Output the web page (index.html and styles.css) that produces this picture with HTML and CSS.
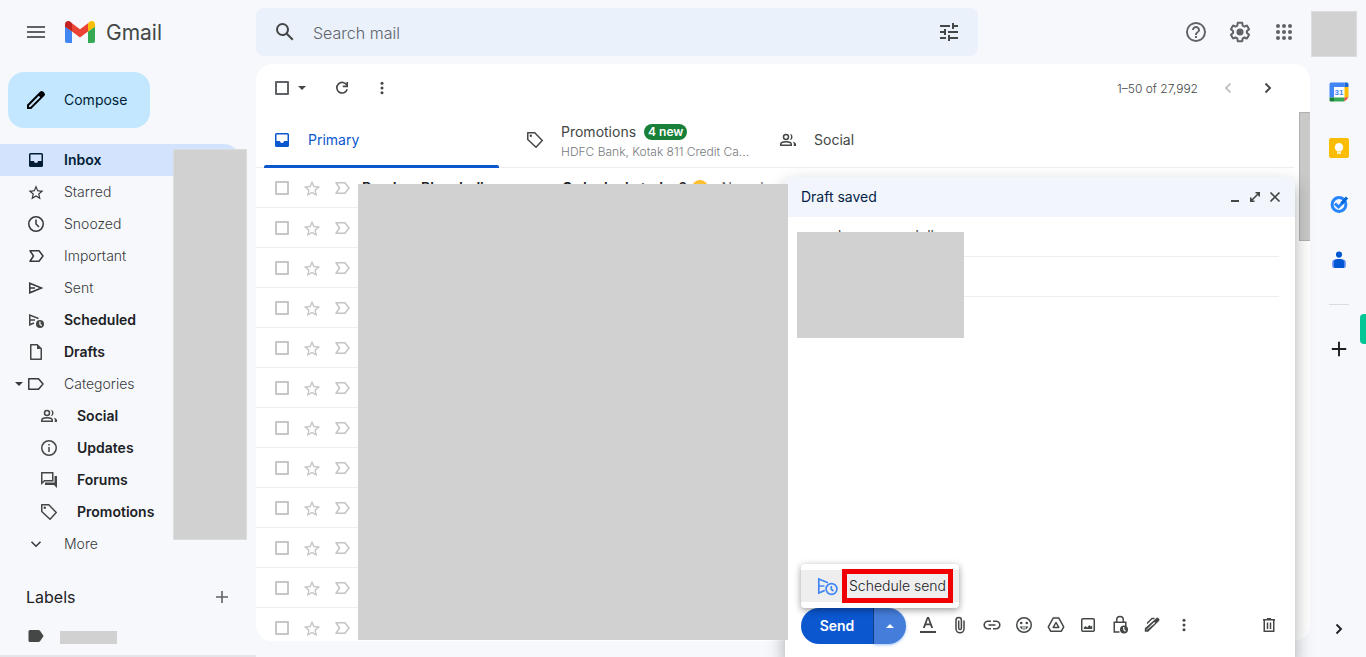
FILE: index.html
```html
<!DOCTYPE html>
<html lang="en">
<head>
<meta charset="utf-8">
<title>Gmail</title>
<link rel="stylesheet" href="styles.css">
</head>
<body>
<svg class="sprite" aria-hidden="true">
  <symbol id="menu" viewBox="0 0 24 24"><path d="M3 18h18v-2H3v2zm0-5h18v-2H3v2zm0-7v2h18V6H3z"/></symbol>
  <symbol id="search" viewBox="0 0 24 24"><path d="M20.49 19l-5.73-5.73C15.53 12.2 16 10.91 16 9.5A6.5 6.5 0 1 0 9.5 16c1.41 0 2.7-.47 3.77-1.24L19 20.49 20.49 19zM5 9.5C5 7.01 7.01 5 9.5 5S14 7.01 14 9.5 11.99 14 9.5 14 5 11.99 5 9.5z"/></symbol>
  <symbol id="tune" viewBox="0 0 24 24"><path d="M3 17v2h6v-2H3zM3 5v2h10V5H3zm10 16v-2h8v-2h-8v-2h-2v6h2zM7 9v2H3v2h4v2h2V9H7zm14 4v-2H11v2h10zm-6-4h2V7h4V5h-4V3h-2v6z"/></symbol>
  <symbol id="help" viewBox="0 0 24 24"><path d="M11 18h2v-2h-2v2zm1-16a10 10 0 1 0 0 20 10 10 0 0 0 0-20zm0 18c-4.41 0-8-3.59-8-8s3.59-8 8-8 8 3.59 8 8-3.59 8-8 8zm0-14c-2.21 0-4 1.79-4 4h2c0-1.1.9-2 2-2s2 .9 2 2c0 2-3 1.75-3 5h2c0-2.25 3-2.5 3-5 0-2.21-1.79-4-4-4z"/></symbol>
  <symbol id="gear" viewBox="0 0 24 24"><path d="M13.85 22.25h-3.7c-.74 0-1.36-.54-1.45-1.27l-.27-1.89c-.27-.14-.53-.29-.79-.46l-1.8.72c-.7.26-1.47-.03-1.81-.65L2.2 15.53c-.35-.66-.2-1.44.36-1.88l1.53-1.19c-.01-.15-.02-.3-.02-.46 0-.15.01-.31.02-.46l-1.52-1.19c-.59-.45-.74-1.26-.37-1.88l1.85-3.19c.34-.62 1.11-.9 1.79-.63l1.81.73c.26-.17.52-.32.78-.46l.27-1.91c.09-.7.71-1.25 1.44-1.25h3.7c.74 0 1.36.54 1.45 1.27l.27 1.89c.27.14.53.29.79.46l1.8-.72c.71-.26 1.48.03 1.82.65l1.84 3.18c.36.66.2 1.44-.36 1.88l-1.52 1.19c.01.15.02.3.02.46s-.01.31-.02.46l1.52 1.19c.56.45.72 1.23.37 1.86l-1.86 3.22c-.34.62-1.11.9-1.8.63l-1.8-.72c-.26.17-.52.32-.78.46l-.27 1.91c-.1.68-.72 1.22-1.46 1.22zm-3.23-2h2.76l.37-2.55.53-.22c.44-.18.88-.44 1.34-.78l.45-.34 2.38.96 1.38-2.4-2.03-1.58.07-.56c.03-.26.06-.51.06-.78s-.03-.53-.06-.78l-.07-.56 2.03-1.58-1.39-2.4-2.39.96-.45-.35c-.42-.32-.87-.58-1.33-.77l-.52-.22-.37-2.55h-2.76l-.37 2.55-.53.21c-.44.19-.88.44-1.34.79l-.45.33-2.38-.95-1.39 2.39 2.03 1.58-.07.56a7 7 0 0 0-.06.79c0 .26.02.53.06.78l.07.56-2.03 1.58 1.38 2.4 2.39-.96.45.35c.43.33.86.58 1.33.77l.53.22.38 2.55z"/><circle cx="12" cy="12" r="3.5"/></symbol>
  <symbol id="apps" viewBox="0 0 24 24"><circle cx="6" cy="6" r="2"/><circle cx="12" cy="6" r="2"/><circle cx="18" cy="6" r="2"/><circle cx="6" cy="12" r="2"/><circle cx="12" cy="12" r="2"/><circle cx="18" cy="12" r="2"/><circle cx="6" cy="18" r="2"/><circle cx="12" cy="18" r="2"/><circle cx="18" cy="18" r="2"/></symbol>
  <symbol id="pencil" viewBox="0 0 24 24"><path d="M20.41 4.94l-1.35-1.35a2 2 0 0 0-2.83 0L3 16.82V21h4.18L20.41 7.77a2 2 0 0 0 0-2.83zM6.41 19.06L5 19v-1.36l9.82-9.82 1.41 1.41-9.82 9.83z"/></symbol>
  <symbol id="inbox" viewBox="0 0 20 20"><path fill-rule="evenodd" d="M4.500 3h11A1.500 1.500 0 0 1 17 4.500v11a1.500 1.500 0 0 1-1.500 1.500h-11A1.500 1.500 0 0 1 3 15.500v-11A1.500 1.500 0 0 1 4.500 3zM4.500 4.500v6.500H8a2 2 0 0 0 4 0h3.500V4.500z"/></symbol>
  <symbol id="star" viewBox="0 0 24 24"><path d="M22 10.240l-7.190-.620L12 3 9.190 9.630 2 10.240l5.460 4.730L5.820 22 12 18.270 18.180 22l-1.630-7.030L22 10.240zM12 16.400l-3.760 2.270 1-4.280-3.320-2.880 4.380-.380L12 7.100l1.710 4.040 4.380.380-3.320 2.880 1 4.280L12 16.400z"/></symbol>
  <symbol id="clock" viewBox="0 0 20 20"><g fill="none" stroke="currentColor" stroke-width="1.500"><circle cx="10" cy="10" r="7.250"/><path d="M10 5.500V10l3 3"/></g></symbol>
  <symbol id="important" viewBox="0 0 20 20"><path fill="none" stroke="currentColor" stroke-width="1.500" stroke-linejoin="round" d="M4 4.750h9L17 10l-4 5.250H4L7.500 10z"/></symbol>
  <symbol id="sent" viewBox="0 0 20 20"><path fill="none" stroke="currentColor" stroke-width="1.500" d="M3.750 5.200L15.500 10 3.750 14.800zM4 10h5"/></symbol>
  <symbol id="scheduled" viewBox="0 0 20 20"><path fill="none" stroke="currentColor" stroke-width="1.500" d="M12.500 8.500L3.750 5v9.800L8 13M4 9.900h5"/><circle cx="14" cy="14" r="4"/><path class="cut" d="M13.900 11.600v2.600l1.700 1.600"/></symbol>
  <symbol id="draft" viewBox="0 0 20 20"><path fill="none" stroke="currentColor" stroke-width="1.500" stroke-linejoin="round" d="M4.750 2.750h6.500l4 4v10.500H4.750z"/><path d="M11 2.500V7h4.500z"/></symbol>
  <symbol id="label" viewBox="0 0 20 20"><path fill="none" stroke="currentColor" stroke-width="1.500" stroke-linejoin="round" d="M2.750 4.750h9.750L17 10l-4.500 5.250H2.750z"/></symbol>
  <symbol id="label-full" viewBox="0 0 20 20"><path d="M4 4h8.500a2 2 0 0 1 1.500.7L17.600 10 14 15.300a2 2 0 0 1-1.500.7H4a1.500 1.500 0 0 1-1.500-1.500v-9A1.500 1.500 0 0 1 4 4z"/></symbol>
  <symbol id="people" viewBox="0 0 20 20"><g fill="none" stroke="currentColor" stroke-width="1.500"><circle cx="8" cy="7" r="2.500"/><path d="M2.750 15.250v-1c0-1.800 3.200-2.500 5.250-2.500s5.250.7 5.250 2.500v1z"/></g><path d="M11.800 10.200a3.250 3.250 0 0 0 0-6.400 5 5 0 0 1 0 6.400zM14.500 11.500c1.700.5 3.500 1.300 3.500 2.800V16h-2.200v-1.700c0-1.200-.4-2.100-1.300-2.800z"/></symbol>
  <symbol id="info" viewBox="0 0 20 20"><circle cx="10" cy="10" r="7.250" fill="none" stroke="currentColor" stroke-width="1.500"/><path d="M9.250 9h1.500v5h-1.500zM9.250 6h1.500v1.500h-1.500z"/></symbol>
  <symbol id="forum" viewBox="0 0 20 20"><path fill="none" stroke="currentColor" stroke-width="1.500" d="M2.750 2.750h11v8H5.500l-2.750 2.500z"/><path d="M15.500 6H18v12l-3-3H6v-2.500h9.500z"/></symbol>
  <symbol id="tag" viewBox="0 0 20 20"><path fill="none" stroke="currentColor" stroke-width="1.500" stroke-linejoin="round" d="M2.750 2.750h7l7.500 7.750-6.250 6.750L2.750 9.500z"/><circle cx="5.800" cy="5.800" r="1.200"/></symbol>
  <symbol id="down" viewBox="0 0 20 20"><path fill="none" stroke="currentColor" stroke-width="1.600" d="M5.500 7.700l4.500 4.500 4.500-4.500"/></symbol>
  <symbol id="left" viewBox="0 0 20 20"><path fill="none" stroke="currentColor" stroke-width="1.700" d="M12.500 5.500L8 10l4.500 4.500"/></symbol>
  <symbol id="right" viewBox="0 0 20 20"><path fill="none" stroke="currentColor" stroke-width="1.900" d="M7.500 5.500L12 10l-4.500 4.500"/></symbol>
  <symbol id="plus" viewBox="0 0 20 20"><path d="M9.200 4h1.600v5.200H16v1.600h-5.200V16H9.200v-5.200H4V9.200h5.200z"/></symbol>
  <symbol id="caret" viewBox="0 0 8 8"><path d="M0 2h8L4 6z"/></symbol>
  <symbol id="caret-up" viewBox="0 0 8 8"><path d="M0 6h8L4 2z"/></symbol>
  <symbol id="refresh" viewBox="0 0 20 20"><path fill="none" stroke="currentColor" stroke-width="1.600" d="M14.800 7.200A5.300 5.300 0 1 0 15.200 11.200"/><path d="M16 4v5.200h-5.200V7.600h3.600V4z"/></symbol>
  <symbol id="more" viewBox="0 0 20 20"><circle cx="10" cy="5.300" r="1.500"/><circle cx="10" cy="10" r="1.500"/><circle cx="10" cy="14.700" r="1.500"/></symbol>
  <symbol id="minimize" viewBox="0 0 16 16"><path d="M4 11h8v2H4z"/></symbol>
  <symbol id="expand" viewBox="0 0 16 16"><path fill="none" stroke="currentColor" stroke-width="1.600" d="M8.500 3.800h3.700v3.700M12 4L4 12M3.800 8.500v3.700h3.700"/></symbol>
  <symbol id="close" viewBox="0 0 16 16"><path fill="none" stroke="currentColor" stroke-width="1.700" d="M3.500 3.500l9 9M12.500 3.500l-9 9"/></symbol>
  <symbol id="format" viewBox="0 0 20 20"><path d="M2 16h16v2H2zM9 2h2l4.200 11h-2l-1-2.800H7.800l-1 2.800h-2zM8.400 8.600h3.200L10 4.100z"/></symbol>
  <symbol id="clip" viewBox="0 0 20 20"><path fill="none" stroke="currentColor" stroke-width="1.500" d="M14 5.500v8.300a4 4 0 0 1-8 0V5.300a2.700 2.700 0 0 1 5.400 0v7.900a1.300 1.300 0 0 1-2.700 0V5.500"/></symbol>
  <symbol id="link" viewBox="0 0 20 20"><path fill="none" stroke="currentColor" stroke-width="1.600" d="M9 6.200H6a3.800 3.800 0 0 0 0 7.600h3M11 6.200h3a3.800 3.800 0 0 1 0 7.600h-3M6.500 10h7"/></symbol>
  <symbol id="emoji" viewBox="0 0 20 20"><circle cx="10" cy="10" r="7.250" fill="none" stroke="currentColor" stroke-width="1.500"/><circle cx="7.200" cy="8" r="1.300"/><circle cx="12.800" cy="8" r="1.300"/><path d="M5.600 11.500h8.800a4.700 4.700 0 0 1-8.800 0z"/><path class="cut" d="M8 12.900h4"/></symbol>
  <symbol id="drive" viewBox="0 0 20 20"><g fill="none" stroke="currentColor" stroke-width="1.500" stroke-linejoin="round"><path d="M7.300 2.900h5.400l5 9-2.300 4.300H4.600l-2.300-4.300z"/><path d="M10 7.500l2.800 4.900H7.200z"/></g></symbol>
  <symbol id="image" viewBox="0 0 20 20"><rect x="3.750" y="3.750" width="12.500" height="12.500" rx="1" fill="none" stroke="currentColor" stroke-width="1.500"/><path d="M5.800 14v-1.500l1.700-1.500 1.600 1.500 2.300-2.500 1.400 1.500 1.400-1v3.500z"/></symbol>
  <symbol id="lock" viewBox="0 0 20 20"><path fill="none" stroke="currentColor" stroke-width="1.500" d="M9.500 17H4.250V7.250h11.500V11M6.700 7V4.800a3.300 3.300 0 0 1 6.600 0V7"/><circle cx="14" cy="14.500" r="4"/><path class="cut" d="M13.800 12v2.700l1.700 1.500"/></symbol>
  <symbol id="pen" viewBox="0 0 20 20"><path d="M14.200 3.200a1.600 1.600 0 0 1 2.300 0l.5.500a1.600 1.600 0 0 1 0 2.300L6.200 16.800H2.800v-3.500zM12.200 7l-7.800 7.800v.5l8.800-7.300z" fill-rule="evenodd"/><path fill="none" stroke="currentColor" stroke-width="1.400" d="M5 8.500l5-5h2.500"/></symbol>
  <symbol id="trash" viewBox="0 0 20 20"><path fill="none" stroke="currentColor" stroke-width="1.500" d="M5.250 5.500v10.750h9.500V5.500M4 4.750h12M8.500 7.500V14M11.500 7.500V14"/><path d="M8 3h4v1.500H8z"/></symbol>
  <symbol id="schedule-send" viewBox="0 0 22 22"><g fill="none" stroke="currentColor" stroke-width="1.700"><path d="M12 7.700L2.800 4v14l6-2.600M3 11h5.500"/><circle cx="15.500" cy="14" r="5.400"/><path d="M15.300 11v3.300l2.200 1.700"/></g></symbol>
</svg>

<header class="topbar">
  <div class="brand">
    <button class="icon-btn" aria-label="Main menu"><svg class="i24"><use href="#menu"/></svg></button>
    <svg class="logo" viewBox="0 0 30 22" aria-hidden="true">
      <path fill="#4285f4" d="M0 5.500l7 5V22H2a2 2 0 0 1-2-2z"/>
      <path fill="#34a853" d="M30 5.500l-7 5V22h5a2 2 0 0 0 2-2z"/>
      <path fill="#ea4335" d="M7 2.200l8 6 8-6v8.300l-8 6-8-6z"/>
      <path fill="#c5221f" d="M0 7V3.200C0 .4 3.200-1 5.400.8L7 2.200v8.300L0 5.800z"/>
      <path fill="#fbbc04" d="M30 7V3.200c0-2.800-3.200-4.200-5.400-2.400L23 2.200v8.300l7-4.700z"/>
    </svg>
    <span class="brand-name">Gmail</span>
  </div>
  <form class="search">
    <button type="button" aria-label="Search"><svg class="i24"><use href="#search"/></svg></button>
    <input type="text" placeholder="Search mail" aria-label="Search mail">
    <button type="button" aria-label="Show search options"><svg class="i24"><use href="#tune"/></svg></button>
  </form>
  <div class="account">
    <button class="icon-btn" aria-label="Support"><svg class="i24"><use href="#help"/></svg></button>
    <button class="icon-btn" aria-label="Settings"><svg class="i24"><use href="#gear"/></svg></button>
    <button class="icon-btn" aria-label="Google apps"><svg class="i24"><use href="#apps"/></svg></button>
    <span class="avatar"></span>
  </div>
</header>

<div class="app">
  <aside class="sidebar">
    <button class="compose-btn"><svg class="i24"><use href="#pencil"/></svg>Compose</button>
    <nav class="folders">
      <a href="#" class="folder active"><svg class="i20"><use href="#inbox"/></svg>Inbox</a>
      <a href="#" class="folder"><svg class="i20 star-icon"><use href="#star"/></svg>Starred</a>
      <a href="#" class="folder"><svg class="i20"><use href="#clock"/></svg>Snoozed</a>
      <a href="#" class="folder"><svg class="i20"><use href="#important"/></svg>Important</a>
      <a href="#" class="folder"><svg class="i20"><use href="#sent"/></svg>Sent</a>
      <a href="#" class="folder unread"><svg class="i20"><use href="#scheduled"/></svg>Scheduled</a>
      <a href="#" class="folder unread"><svg class="i20"><use href="#draft"/></svg>Drafts</a>
      <a href="#" class="folder expandable"><svg class="i8"><use href="#caret"/></svg><svg class="i20"><use href="#label"/></svg>Categories</a>
      <a href="#" class="folder sub unread"><svg class="i20"><use href="#people"/></svg>Social</a>
      <a href="#" class="folder sub unread"><svg class="i20"><use href="#info"/></svg>Updates</a>
      <a href="#" class="folder sub unread"><svg class="i20"><use href="#forum"/></svg>Forums</a>
      <a href="#" class="folder sub unread"><svg class="i20"><use href="#tag"/></svg>Promotions</a>
      <a href="#" class="folder"><svg class="i20"><use href="#down"/></svg>More</a>
    </nav>
    <div class="labels-head">
      <h2>Labels</h2>
      <button aria-label="Create new label"><svg class="i20"><use href="#plus"/></svg></button>
    </div>
    <div class="label-row"><svg class="i20"><use href="#label-full"/></svg><span class="label-mask"></span></div>
    <span class="count-mask"></span>
  </aside>

  <main class="mail">
    <div class="toolbar">
      <input type="checkbox" class="box" aria-label="Select all">
      <button class="select-menu" aria-label="Select options"><svg class="i8"><use href="#caret"/></svg></button>
      <button class="tool" aria-label="Refresh"><svg class="i20"><use href="#refresh"/></svg></button>
      <button class="tool" aria-label="More"><svg class="i20"><use href="#more"/></svg></button>
      <span class="range">1–50 of 27,992</span>
      <button class="tool faded" aria-label="Newer"><svg class="i20"><use href="#left"/></svg></button>
      <button class="tool" aria-label="Older"><svg class="i20"><use href="#right"/></svg></button>
    </div>
    <div class="tabs">
      <a href="#" class="tab current"><svg class="i20"><use href="#inbox"/></svg><span>Primary</span></a>
      <a href="#" class="tab"><svg class="i20"><use href="#tag"/></svg><span class="tab-text"><span class="tab-title">Promotions<b class="badge">4 new</b></span><small>HDFC Bank, Kotak 811 Credit Ca...</small></span></a>
      <a href="#" class="tab"><svg class="i20"><use href="#people"/></svg><span>Social</span></a>
    </div>
    <ul class="messages">
      <li><input type="checkbox" class="box" aria-label="Select"><svg class="i20"><use href="#star"/></svg><svg class="i20"><use href="#important"/></svg><b class="from">Random Blog, Indi</b><span class="subject"><b>Order login today?</b><i class="dot"></i>Namelu</span></li>
      <li><input type="checkbox" class="box" aria-label="Select"><svg class="i20"><use href="#star"/></svg><svg class="i20"><use href="#important"/></svg></li>
      <li><input type="checkbox" class="box" aria-label="Select"><svg class="i20"><use href="#star"/></svg><svg class="i20"><use href="#important"/></svg></li>
      <li><input type="checkbox" class="box" aria-label="Select"><svg class="i20"><use href="#star"/></svg><svg class="i20"><use href="#important"/></svg></li>
      <li><input type="checkbox" class="box" aria-label="Select"><svg class="i20"><use href="#star"/></svg><svg class="i20"><use href="#important"/></svg></li>
      <li><input type="checkbox" class="box" aria-label="Select"><svg class="i20"><use href="#star"/></svg><svg class="i20"><use href="#important"/></svg></li>
      <li><input type="checkbox" class="box" aria-label="Select"><svg class="i20"><use href="#star"/></svg><svg class="i20"><use href="#important"/></svg></li>
      <li><input type="checkbox" class="box" aria-label="Select"><svg class="i20"><use href="#star"/></svg><svg class="i20"><use href="#important"/></svg></li>
      <li><input type="checkbox" class="box" aria-label="Select"><svg class="i20"><use href="#star"/></svg><svg class="i20"><use href="#important"/></svg></li>
      <li><input type="checkbox" class="box" aria-label="Select"><svg class="i20"><use href="#star"/></svg><svg class="i20"><use href="#important"/></svg></li>
      <li><input type="checkbox" class="box" aria-label="Select"><svg class="i20"><use href="#star"/></svg><svg class="i20"><use href="#important"/></svg></li>
      <li><input type="checkbox" class="box" aria-label="Select"><svg class="i20"><use href="#star"/></svg><svg class="i20"><use href="#important"/></svg></li>
    </ul>
    <span class="scroll-thumb"></span>
  </main>

  <aside class="addons">
    <button aria-label="Calendar"><svg class="i20" viewBox="0 0 20 20"><path fill="#fff" d="M4 4h12v12H4z"/><path fill="#4285f4" d="M2 .5h13.500V5H5v10.500H.5V2A1.500 1.500 0 0 1 2 .5z"/><path fill="#1967d2" d="M15.500.5H18A1.500 1.500 0 0 1 19.500 2v3h-4z"/><path fill="#fbbc04" d="M15.500 5h4v10.500h-4z"/><path fill="#34a853" d="M5 15.500h10.500v4H5z"/><path fill="#188038" d="M.5 15.500H5v4H2A1.500 1.500 0 0 1 .5 18z"/><path fill="#ea4335" d="M15.500 15.500h4l-4 4z"/><text x="10" y="13" class="cal-text">31</text></svg></button>
    <button aria-label="Keep"><svg class="i20" viewBox="0 0 20 20"><rect width="20" height="20" rx="2" fill="#fbbc04"/><path fill="#fff" d="M10 5a4.200 4.200 0 0 0-2.300 7.700V13.500h4.600v-.8A4.200 4.200 0 0 0 10 5zM8 14.300h4v1.400H8z"/></svg></button>
    <button aria-label="Tasks"><svg class="i20" viewBox="0 0 20 20"><circle cx="10" cy="10.500" r="6.900" fill="none" stroke="#2684fc" stroke-width="3"/><path fill="none" stroke="#2684fc" stroke-width="3" d="M6 9.500l3.500 3.500 6-6"/><path fill="none" stroke="#0066da" stroke-width="3" d="M12.500 9.500l5.500-6"/></svg></button>
    <button aria-label="Contacts"><svg class="i20" viewBox="0 0 20 20"><circle cx="10" cy="4.600" r="3.100" fill="#0057d2"/><path fill="#5a88f5" d="M6.500 9.500h7a3.300 3.300 0 0 1 3.300 3.300V16a2 2 0 0 1-2 2H5.200a2 2 0 0 1-2-2v-3.200a3.300 3.300 0 0 1 3.300-3.300z"/><path fill="#0057d2" d="M8 9h4a3.500 3.500 0 0 1 3 3.500V18H6.500a1.500 1.500 0 0 1-1.500-1.500v-4A3.500 3.500 0 0 1 8 9z"/></svg></button>
    <hr>
    <button class="add" aria-label="Get add-ons"><svg class="i24"><use href="#plus"/></svg></button>
    <button class="collapse" aria-label="Hide side panel"><svg class="i20"><use href="#right"/></svg></button>
    <span class="side-tag"></span>
  </aside>
</div>

<section class="draft" aria-label="Draft saved">
  <div class="draft-head">
    <h2>Draft saved</h2>
    <button aria-label="Minimize"><svg class="i16"><use href="#minimize"/></svg></button>
    <button aria-label="Full screen"><svg class="i16"><use href="#expand"/></svg></button>
    <button aria-label="Close"><svg class="i16"><use href="#close"/></svg></button>
  </div>
  <div class="draft-body">
    <div class="field">scandananonamdull</div>
    <div class="field"></div>
    <span class="draft-mask"></span>
  </div>
  <div class="actions">
    <div class="send-group">
      <button class="send">Send</button><button class="send-more" aria-label="More send options"><svg class="i8"><use href="#caret-up"/></svg></button>
      <div class="send-menu"><button class="send-item"><svg class="i22"><use href="#schedule-send"/></svg><span>Schedule send</span></button></div>
    </div>
    <button class="act" aria-label="Formatting options"><svg class="i20"><use href="#format"/></svg></button>
    <button class="act" aria-label="Attach files"><svg class="i20"><use href="#clip"/></svg></button>
    <button class="act" aria-label="Insert link"><svg class="i20"><use href="#link"/></svg></button>
    <button class="act" aria-label="Insert emoji"><svg class="i20"><use href="#emoji"/></svg></button>
    <button class="act" aria-label="Insert files using Drive"><svg class="i20"><use href="#drive"/></svg></button>
    <button class="act" aria-label="Insert photo"><svg class="i20"><use href="#image"/></svg></button>
    <button class="act" aria-label="Confidential mode"><svg class="i20"><use href="#lock"/></svg></button>
    <button class="act" aria-label="Insert signature"><svg class="i20"><use href="#pen"/></svg></button>
    <button class="act" aria-label="More options"><svg class="i20"><use href="#more"/></svg></button>
    <button class="act discard" aria-label="Discard draft"><svg class="i20"><use href="#trash"/></svg></button>
  </div>
</section>
<div class="list-mask"></div>
</body>
</html>
```
FILE: styles.css
```css
* { box-sizing: border-box; }
body {
  margin: 0;
  height: 100vh;
  overflow: hidden;
  position: relative;
  display: flex;
  flex-direction: column;
  background: #f6f8fc;
  color: #444746;
  font: 14px/20px Inter, "Liberation Sans", sans-serif;
}
button {
  display: flex;
  align-items: center;
  justify-content: center;
  padding: 0;
  border: 0;
  background: none;
  color: inherit;
  font: inherit;
}
a { color: inherit; text-decoration: none; }
h2 { margin: 0; font-weight: 400; }
svg { display: block; flex: none; fill: currentColor; }
.sprite { position: absolute; width: 0; height: 0; }
.cut { fill: none; stroke: #fff; stroke-width: 1.2; }
.i8 { width: 8px; height: 8px; }
.i16 { width: 16px; height: 16px; }
.i20 { width: 20px; height: 20px; }
.i22 { width: 22px; height: 22px; }
.i24 { width: 24px; height: 24px; }

.topbar { display: flex; align-items: center; height: 64px; flex: none; color: #5f6368; }
.brand { display: flex; align-items: center; width: 256px; flex: none; padding-left: 16px; }
.icon-btn { width: 40px; height: 40px; }
.logo { width: 30px; height: 22px; margin: 0 11px 0 9px; }
.brand-name { padding-top: 2px; font-size: 21px; line-height: 24px; color: #444746; }
.search {
  display: flex;
  align-items: center;
  flex: 0 1 722px;
  height: 48px;
  padding: 0 17px;
  border-radius: 8px;
  background: #eaf1fb;
  color: #444746;
}
.search input {
  flex: 1;
  min-width: 0;
  padding: 2px 16px 0;
  border: 0;
  background: none;
  font: 300 16px/24px Inter, "Liberation Sans", sans-serif;
}
.search input::placeholder { color: #5f6368; opacity: 1; }
.account { display: flex; align-items: center; gap: 4px; margin-left: auto; padding-right: 9px; }
.avatar { width: 46px; height: 46px; margin: 3px 0 0 3px; background: #d1d1d1; border: 1px solid #dadcdd; }

.app { display: flex; flex: 1; min-height: 0; }
.sidebar {
  position: relative;
  width: 256px;
  flex: none;
  padding-top: 8px;
  border-bottom: 2px solid #e4e5ea;
}
.compose-btn {
  gap: 16px;
  height: 56px;
  margin-left: 8px;
  padding: 0 23px 0 16px;
  border-radius: 16px;
  background: #c2e7ff;
  color: #001d35;
}
.compose-btn svg { color: #000; }
.folders { display: flex; flex-direction: column; margin: 16px 16px 0 0; }
.folder {
  display: flex;
  align-items: center;
  gap: 18px;
  height: 32px;
  padding-left: 26px;
  border-radius: 0 16px 16px 0;
  color: #36393a;
  font-weight: 300;
}
.folder.active { background: #d3e3fd; color: #001d35; font-weight: 600; }
.folder.unread { color: #202124; font-weight: 600; }
.folder.unread svg { color: #444746; }
.folder.sub { padding-left: 39px; }
.folder.expandable { padding-left: 15px; }
.folder.expandable .i8 { margin-right: -15px; }
.star-icon { padding: 1px; }
.labels-head {
  display: flex;
  align-items: center;
  justify-content: space-between;
  height: 40px;
  margin-top: 17px;
  padding: 0 24px 0 26px;
  color: #202124;
}
.labels-head h2 { font-size: 16px; line-height: 20px; }
.labels-head button { color: #5f6368; }
.label-row { display: flex; align-items: center; gap: 14px; height: 38px; padding-left: 26px; }
.label-mask { width: 57px; height: 13px; margin-top: 2px; background: #d1d1d1; }
.count-mask { position: absolute; left: 173px; top: 85px; width: 74px; height: 391px; background: #d1d1d1; border: 1px solid #dadcdd; }

.mail {
  position: relative;
  flex: 1;
  min-width: 0;
  display: flex;
  flex-direction: column;
  margin-bottom: 16px;
  overflow: hidden;
  border-radius: 16px;
  background: #fff;
}
.box {
  appearance: none;
  flex: none;
  width: 14px;
  height: 14px;
  margin: 0;
  border: 2px solid #5f6368;
  border-radius: 1px;
}
.toolbar { display: flex; align-items: center; height: 48px; flex: none; padding: 0 22px 0 19px; }
.select-menu { width: 26px; height: 20px; margin-right: 7px; }
.tool { width: 40px; height: 40px; }
.faded { color: #b7b9bb; }
.range { margin-left: auto; margin-right: 10px; padding-top: 1px; font-size: 12px; font-weight: 300; color: #444746; }
.tabs { display: flex; height: 56px; flex: none; margin-right: 16px; border-bottom: 1px solid #eceff1; }
.tab {
  position: relative;
  display: flex;
  align-items: center;
  gap: 16px;
  width: 253px;
  padding-left: 16px;
}
.tab.current { color: #0b57d0; }
.tab.current::after {
  content: "";
  position: absolute;
  left: 8px;
  right: 10px;
  bottom: -1px;
  height: 3px;
  border-radius: 2px 2px 0 0;
  background: #0b57d0;
}
.tab-text { display: flex; flex-direction: column; width: 182px; padding-top: 4px; }
.tab-title { display: flex; align-items: center; gap: 8px; }
.badge {
  padding: 0 4px;
  border-radius: 8px;
  background: #188038;
  color: #fff;
  font-size: 12px;
  line-height: 16px;
  font-weight: 600;
}
.tab small { color: #777a7e; font-size: 12px; font-weight: 300; white-space: nowrap; }
.messages { margin: 0 16px 0 0; padding: 0; list-style: none; }
.messages li {
  display: flex;
  align-items: center;
  gap: 10px;
  height: 40px;
  padding-left: 19px;
  border-bottom: 1px solid #eceff1;
  color: #c2c4c6;
}
.messages .box { border-color: #c4c6c8; margin-right: 3px; }
.from { width: 190px; color: #202124; font-weight: 600; }
.subject { display: flex; align-items: center; color: #5f6368; }
.subject b { color: #202124; font-weight: 600; }
.dot { width: 16px; height: 16px; margin: 0 14px 0 5px; border-radius: 50%; background: #fbc02d; }
.scroll-thumb { position: absolute; right: 0; top: 48px; width: 11px; height: 129px; background: #c9c9c9; border: 1px solid #b0b0b0; border-right: 0; }

.addons {
  position: relative;
  display: flex;
  flex-direction: column;
  align-items: center;
  width: 56px;
  flex: none;
  padding: 8px 0 8px 2px;
}
.addons button { width: 40px; height: 40px; margin-bottom: 16px; }
.addons hr { width: 20px; margin: 8px 0 24px; border: 0; border-top: 1px solid #dadce0; }
.addons .add { color: #1f1f1f; }
.addons .collapse { margin: auto 0 0; color: #202124; }
.cal-text { fill: #4285f4; font: 700 8px "Liberation Sans", sans-serif; text-anchor: middle; }
.side-tag { position: absolute; right: 0; top: 250px; width: 6px; height: 30px; border-radius: 4px 0 0 4px; background: #00c795; }

.draft {
  position: absolute;
  right: 71px;
  bottom: 0;
  display: flex;
  flex-direction: column;
  width: 510px;
  height: 480px;
  border-radius: 8px 8px 0 0;
  background: #fff;
  box-shadow: 0 8px 16px 2px rgba(60, 64, 67, .35);
}
.draft-head {
  display: flex;
  align-items: center;
  gap: 4px;
  height: 40px;
  padding: 0 12px 0 16px;
  border-radius: 8px 8px 0 0;
  background: #f2f6fc;
}
.draft-head h2 { margin-right: auto; font-size: 14px; line-height: 20px; color: #041e49; }
.draft-body { position: relative; flex: 1; padding: 0 16px; }
.field { height: 40px; padding-top: 9px; border-bottom: 1px solid #eceff1; }
.draft-mask { position: absolute; left: 12px; top: 15px; width: 167px; height: 106px; background: #d1d1d1; }
.actions { display: flex; align-items: center; gap: 12px; padding: 0 16px 13px; }
.send-group { position: relative; display: flex; }
.send { width: 73px; height: 36px; border-right: 1px solid #062e6f; border-radius: 18px 0 0 18px; background: #0b57d0; color: #fff; font-weight: 600; }
.send-more { width: 32px; height: 36px; border-radius: 0 18px 18px 0; background: #447dda; color: #fff; box-shadow: 0 1px 3px rgba(66, 133, 244, .5); }
.send-menu {
  position: absolute;
  left: 0;
  bottom: 36px;
  padding: 6px 0;
  border-radius: 4px;
  background: #fff;
  box-shadow: 0 2px 7px rgba(0, 0, 0, .4);
}
.send-item { justify-content: flex-start; width: 158px; height: 32px; gap: 9px; padding-left: 15px; background: #eee; color: #202124; }
.send-item svg { color: #4285f4; }
.send-item span { padding: 2px; outline: 5px solid #f00000; white-space: nowrap; font-weight: 300; }
.act { width: 20px; height: 22px; align-items: flex-start; }
.discard { margin-left: auto; }
.list-mask { position: absolute; left: 358px; right: 578px; top: 184px; bottom: 17px; background: #d1d1d1; }
```
